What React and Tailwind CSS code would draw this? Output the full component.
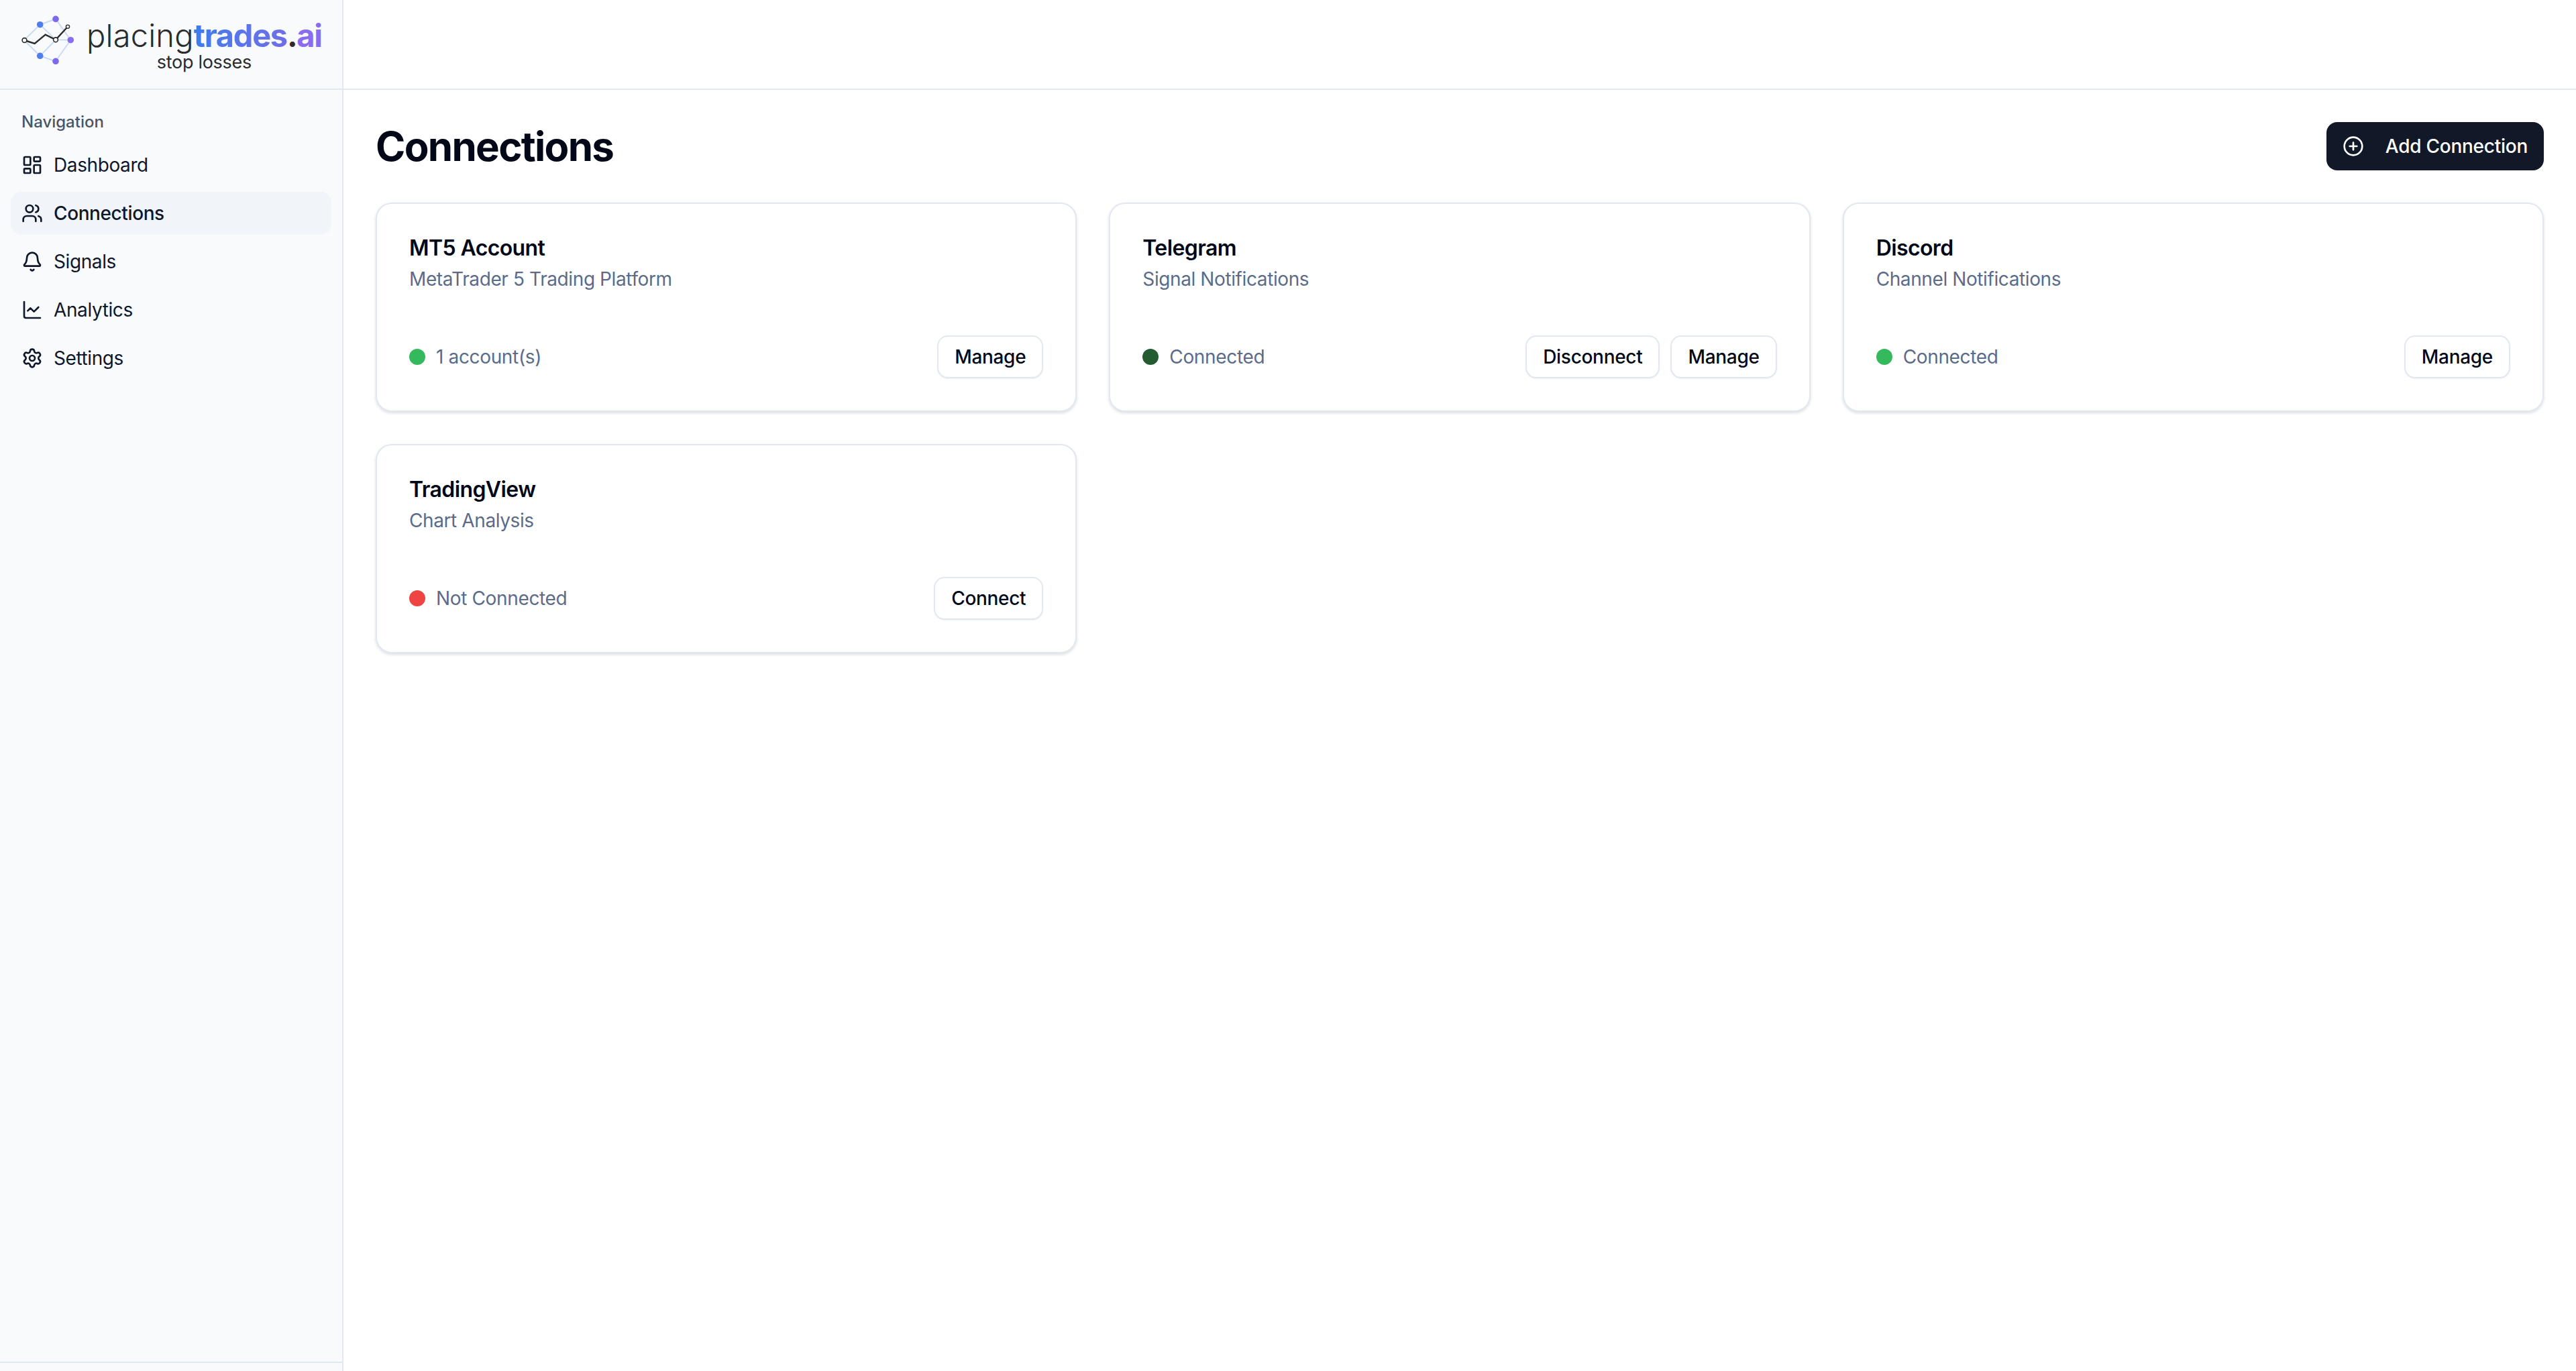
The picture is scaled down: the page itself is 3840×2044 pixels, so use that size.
import React from "react";
import { LayoutDashboard, Users, Bell, ChartLine, Settings, CirclePlus } from "lucide-react";

function Logo() {
  const light = [
    [36, 60, 59.7, 36.7], [59.7, 36.7, 83, 28.3], [59.7, 36.7, 83, 59.3], [83, 28.3, 105.3, 59.7],
    [36, 60, 59.7, 83.3], [59.7, 83.3, 83, 59.3], [59.7, 83.3, 83, 91.3], [83, 91.3, 105.3, 59.7], [83, 59.3, 105.3, 59.7],
  ];
  return (
    <svg width="90" height="80" viewBox="30 20 90 80" className="mt-[20px] shrink-0 self-start">
      {light.map((l, i) => (
        <line key={i} x1={l[0]} y1={l[1]} x2={l[2]} y2={l[3]} stroke="#c4d9f8" strokeWidth="1.8" />
      ))}
      <circle cx="59.7" cy="36.7" r="4.8" fill="#4f7df0" />
      <circle cx="59.7" cy="83.3" r="4.8" fill="#4f7df0" />
      <circle cx="83" cy="28.3" r="4.8" fill="#7c68ee" />
      <circle cx="83" cy="91.3" r="4.8" fill="#7c68ee" />
      <circle cx="105.3" cy="59.7" r="4.8" fill="#8a6cf0" />
      <polyline points="36,60 51.7,65 67.7,51.7 83,59.3 101,39.7" fill="none" stroke="#2b2b2b" strokeWidth="2.4" />
      <circle cx="36.5" cy="60" r="3.4" fill="#fff" stroke="#2b2b2b" strokeWidth="1.6" />
      <circle cx="83" cy="59.3" r="3.4" fill="#fff" stroke="#2b2b2b" strokeWidth="1.6" />
      <circle cx="101" cy="39.7" r="2.6" fill="#fff" stroke="#2b2b2b" strokeWidth="1.4" />
    </svg>
  );
}

const nav = [
  { label: "Dashboard", Icon: LayoutDashboard },
  { label: "Connections", Icon: Users, active: true },
  { label: "Signals", Icon: Bell },
  { label: "Analytics", Icon: ChartLine },
  { label: "Settings", Icon: Settings },
];

const cards = [
  { title: "MT5 Account", desc: "MetaTrader 5 Trading Platform", status: "1 account(s)", dot: "bg-[#34b95c]", actions: ["Manage"] },
  { title: "Telegram", desc: "Signal Notifications", status: "Connected", dot: "bg-[#235c30]", actions: ["Disconnect", "Manage"] },
  { title: "Discord", desc: "Channel Notifications", status: "Connected", dot: "bg-[#34b95c]", actions: ["Manage"] },
  { title: "TradingView", desc: "Chart Analysis", status: "Not Connected", dot: "bg-[#ef4444]", actions: ["Connect"] },
];

function Card({ c }) {
  return (
    <div className="h-[312px] rounded-[24px] border-2 border-[#e2e8f0] bg-white px-[48px] pt-[44px] shadow-[0_2px_4px_rgba(15,23,42,0.14)]">
      <h3 className="text-[32px] leading-[44px] font-semibold tracking-[-0.6px] text-[#020817]">{c.title}</h3>
      <p className="mt-[4px] text-[28px] leading-[40px] tracking-[-0.4px] text-[#5b6b8a]">{c.desc}</p>
      <div className="mt-[64px] flex items-center justify-between">
        <div className="flex items-center gap-[16px]">
          <span className={`h-[24px] w-[24px] rounded-full ${c.dot}`} />
          <span className="text-[28px] leading-[40px] tracking-[-0.35px] text-[#5b6b8a]">{c.status}</span>
        </div>
        <div className="flex gap-[16px]">
          {c.actions.map((a) => (
            <button key={a} className="h-[64px] rounded-[16px] border-2 border-[#e2e8f0] bg-white px-[24px] text-[28px] font-medium tracking-[-0.3px] text-[#020817] shadow-[0_1px_2px_rgba(15,23,42,0.06)]">
              {a}
            </button>
          ))}
        </div>
      </div>
    </div>
  );
}

export default function App() {
  return (
    <div className="flex h-[2044px] w-[3840px] overflow-hidden bg-white font-['Inter',sans-serif] text-[#020817]">
      <aside className="flex w-[512px] shrink-0 flex-col border-r-2 border-[#e2e8f0] bg-[#f8fafc]">
        <div className="flex h-[134px] shrink-0 items-start border-b-2 border-[#e2e8f0] pl-[30px]">
          <Logo />
          <div className="mt-[33px] ml-[9px] flex flex-col items-center">
            <div className="text-[47px] leading-[40px] font-[340] tracking-[0.2px] text-[#2b2b2b]">
              placing
              <span className="tracking-[-1.3px]">
                <span className="bg-gradient-to-r from-[#3b7cec] to-[#6f6ee8] bg-clip-text font-bold text-transparent">trades</span>
                <span className="font-bold text-[#2b2b2b]">.</span>
                <span className="font-bold text-[#8b6cf0]">ai</span>
              </span>
            </div>
            <div className="mt-[6px] text-[27px] leading-[28px] font-normal tracking-[-0.3px] text-[#2b2b2b]">stop losses</div>
          </div>
        </div>
        <div className="flex flex-1 flex-col px-[16px] pt-[32px]">
          <div className="flex h-[32px] items-center px-[16px] text-[24px] font-medium text-[#4b5563]">Navigation</div>
          <nav className="mt-[16px] flex flex-col gap-[8px]">
            {nav.map(({ label, Icon, active }) => (
              <div key={label} className={`flex h-[64px] items-center gap-[16px] rounded-[16px] px-[16px] text-[28px] tracking-[-0.4px] text-[#0f172a] ${active ? "bg-[#f1f5f9] font-medium" : ""}`}>
                <Icon size={32} strokeWidth={2} />
                <span>{label}</span>
              </div>
            ))}
          </nav>
        </div>
        <div className="h-[14px] shrink-0 border-t-2 border-[#e2e8f0]" />
      </aside>
      <div className="flex min-w-0 flex-1 flex-col">
        <header className="h-[134px] shrink-0 border-b-2 border-[#e2e8f0] bg-white" />
        <main className="flex-1 p-[48px]">
          <div className="flex items-center justify-between">
            <h1 className="text-[60px] leading-[72px] font-bold tracking-[-1.7px] text-[#020817]">Connections</h1>
            <button className="flex h-[72px] items-center gap-[32px] rounded-[16px] bg-[#111827] px-[24px] text-[28px] font-medium tracking-[-0.26px] text-white">
              <CirclePlus size={32} strokeWidth={2} />
              Add Connection
            </button>
          </div>
          <div className="mt-[48px] grid grid-cols-3 gap-[48px]">
            {cards.map((c) => (
              <Card key={c.title} c={c} />
            ))}
          </div>
        </main>
      </div>
    </div>
  );
}
